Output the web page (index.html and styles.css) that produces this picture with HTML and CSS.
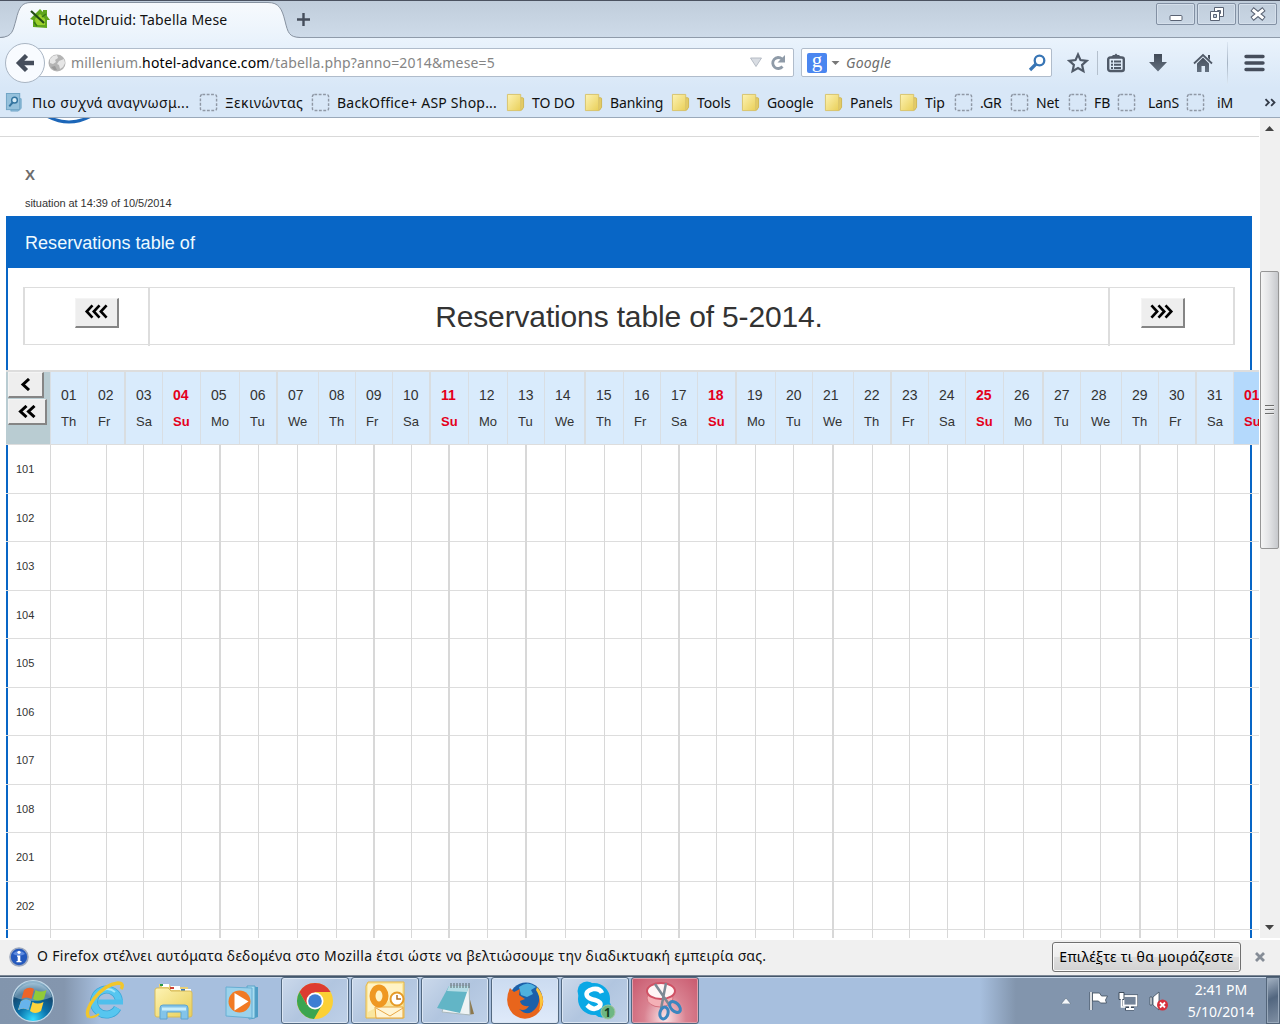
FILE: index.html
```html
<!DOCTYPE html>
<html lang="en">
<head>
<meta charset="utf-8">
<title>HotelDruid: Tabella Mese</title>
<link rel="stylesheet" href="styles.css">
</head>
<body>
<svg class="defs" width="0" height="0">
  <defs>
    <linearGradient id="gold" x1="0" y1="0" x2="1" y2="1"><stop offset="0" stop-color="#fdf3b4"/><stop offset="1" stop-color="#e9cf58"/></linearGradient>
    <linearGradient id="steel" x1="0" y1="0" x2="0" y2="1"><stop offset="0" stop-color="#414a57"/><stop offset="1" stop-color="#647180"/></linearGradient>
    <symbol id="folder" viewBox="0 0 20 20"><path d="M14 5h3.500a1 1 0 0 1 1 1v9l-2 3H13z" fill="#e3cb66" stroke="#cdb552"/><path d="M1.500 1.500h14v17h-14z" fill="url(#gold)" stroke="#d8c36c"/></symbol>
    <symbol id="blank" viewBox="0 0 20 20"><rect x="1.500" y="1.500" width="17" height="17" rx="2" fill="none" stroke="#8f98a5" stroke-width="1.500" stroke-dasharray="3 1.600"/></symbol>
  </defs>
</svg>

<header class="chrome">
  <div class="tabs">
    <svg class="tab-shape" width="300" height="38" viewBox="0 0 300 38"><defs><linearGradient id="tabfill" x1="0" y1="0" x2="0" y2="1"><stop offset="0" stop-color="#f7fafd"/><stop offset="1" stop-color="#eaf3fc"/></linearGradient></defs><path d="M0 38V37C13 36 13 29 16 19C19 6 22 1.500 31 1.500H268C279 1.500 282 8 285 20C288 32 289 36 300 36.500V38z" fill="url(#tabfill)"/><path d="M0 36.500C13 36 13 29 16 19C19 6 22 1.500 31 1.500H268C279 1.500 282 8 285 20C288 32 289 36 300 36.500" fill="none" stroke="#8792a0"/></svg>
    <svg class="favicon" width="22" height="22" viewBox="0 0 22 22"><path d="M1 11L11 1L14 4V2H18V8L21 12L18 12L18 20L4 19V12z" fill="#5fa51c"/><path d="M6 11L11 6L16 11V17H7z" fill="#9bd02c"/><path d="M2 3L15 15" stroke="#234c16" stroke-width="2.200"/><path d="M5 14l3 4M13 9l4-3" stroke="#397914" stroke-width="1.500"/></svg>
    <span class="tab-title">HotelDruid: Tabella Mese</span>
    <svg class="plus" width="15" height="15" viewBox="0 0 15 15"><path d="M7.500 1v13M1 7.500h13" stroke="#454d5b" stroke-width="2.400"/></svg>
    <div class="window-buttons">
      <span><svg width="16" height="16" viewBox="0 0 16 16"><rect x="2" y="9.500" width="12" height="5" rx="1" fill="#fff" stroke="#596273"/></svg></span>
      <span><svg width="16" height="16" viewBox="0 0 16 16"><path d="M5.500 1.500h9v9h-9z" fill="#fff" stroke="#596273"/><path d="M8.500 4.500h3v3h-3z" fill="#c4d0df" stroke="#596273"/><path d="M1.500 5.500h9v9h-9z" fill="#fff" stroke="#596273"/><path d="M4.500 8.500h3v3h-3z" fill="#c4d0df" stroke="#596273"/></svg></span>
      <span><svg width="16" height="16" viewBox="0 0 16 16"><path d="M2 3l12 10M14 3L2 13" stroke="#596273" stroke-width="5"/><path d="M2.700 3.600l10.600 8.800M13.300 3.600L2.700 12.400" stroke="#fff" stroke-width="3"/></svg></span>
    </div>
  </div>

  <div class="navbar">
    <span class="back"><svg width="20" height="20" viewBox="0 0 20 20"><path d="M11.500 2.500L4 10l7.500 7.500M4 10h15" fill="none" stroke="#454d5b" stroke-width="4.400"/></svg></span>
    <div class="address">
      <svg width="18" height="18" viewBox="0 0 18 18"><circle cx="9" cy="9" r="8.500" fill="#b4b4b4"/><path d="M2 5l3-3 4-1 1 3-3 2 1 2-3 2-3-1zM11 7l5-2 1 4-2 4-3 2-1-4-2-1z" fill="#e6e6e6"/><path d="M3 13l4-1 2 4-3 0z" fill="#999"/></svg>
      <span class="url">millenium.<b>hotel-advance.com</b>/tabella.php?anno=2014&amp;mese=5</span>
      <svg class="drop" width="14" height="11" viewBox="0 0 14 11"><path d="M1.500 1h11L7 9.500z" fill="#d9dde3" stroke="#b6bcc5"/></svg>
      <svg class="reload" width="16" height="16" viewBox="0 0 16 16"><path d="M12.500 11.500A5.500 5.500 0 1 1 12 4" fill="none" stroke="#8f9ba8" stroke-width="2.800"/><path d="M15 0v7.500H7.500z" fill="#8f9ba8"/></svg>
    </div>
    <div class="search">
      <span class="google">g</span>
      <svg width="9" height="6" viewBox="0 0 9 6"><path d="M.5 1h8L4.500 5z" fill="#777"/></svg>
      <i>Google</i>
      <svg class="lens" width="18" height="18" viewBox="0 0 18 18"><circle cx="11.500" cy="6.500" r="4.800" fill="none" stroke="#3875b5" stroke-width="2.300"/><path d="M8 10L2 16" stroke="#3875b5" stroke-width="3.200"/></svg>
    </div>
    <div class="tools">
      <svg width="22" height="22" viewBox="0 0 22 22"><path d="M11 2.500l2.500 5.600 6.200.7-4.600 4.100 1.300 6.200L11 16l-5.400 3.100 1.300-6.200L2.300 8.800l6.200-.7z" fill="none" stroke="#505a68" stroke-width="2.200"/></svg>
      <span class="divider short"></span>
      <svg width="20" height="20" viewBox="0 0 20 20"><rect x="2.200" y="4.500" width="15.600" height="13.500" rx="2" fill="none" stroke="#505a68" stroke-width="2.400"/><path d="M4 5l3-3h1.500L10 .5 11.500 2H13l3 3zM5 7.500h2v2H5zM8 7.500h7v2H8zM5 10.700h2v2H5zM8 10.700h7v2H8zM5 14h2v2H5zM8 14h7v2H8z" fill="#505a68"/></svg>
      <svg class="down" width="18" height="20" viewBox="0 0 18 20"><path d="M5 1h8v8h5l-9 9.500L0 9h5z" fill="url(#steel)"/></svg>
      <svg class="home" width="20" height="20" viewBox="0 0 20 20"><path d="M1 10.500L10 2l9 8.500" fill="none" stroke="#505a68" stroke-width="1.800"/><path d="M15 2h2v5l-2-2zM10 4.500l6 6V19h-4v-6H8.500v6H4v-8.500z" fill="url(#steel)"/></svg>
      <span class="divider"></span>
      <svg class="menu" width="21" height="18" viewBox="0 0 21 18"><path d="M2 2.500h17M2 9h17M2 15.500h17" stroke="#454d5b" stroke-width="3.400" stroke-linecap="round"/></svg>
    </div>
  </div>

  <nav class="bookmarks">
    <span class="most"><svg viewBox="0 0 18 20"><path d="M12 6h4v10l-3 3H5z" fill="#8ebcd8" stroke="#73a8c8"/><rect x=".5" y=".5" width="14" height="17" fill="#95c1dc" stroke="#6fa4c5"/><circle cx="9" cy="7.500" r="3" fill="#d7ecf7" stroke="#33749f" stroke-width="1.500"/><path d="M7 10l-3.500 4" stroke="#33749f" stroke-width="2"/></svg><em>Πιο συχνά αναγνωσμ...</em></span>
    <span class="greek"><svg><use href="#blank"/></svg><em>Ξεκινώντας</em></span>
    <span class="long"><svg><use href="#blank"/></svg><em>BackOffice+ ASP Shop...</em></span>
    <span><svg><use href="#folder"/></svg><em>TO DO</em></span>
    <span><svg><use href="#folder"/></svg><em>Banking</em></span>
    <span><svg><use href="#folder"/></svg><em>Tools</em></span>
    <span><svg><use href="#folder"/></svg><em>Google</em></span>
    <span><svg><use href="#folder"/></svg><em>Panels</em></span>
    <span><svg><use href="#folder"/></svg><em>Tip</em></span>
    <span><svg><use href="#blank"/></svg><em>.GR</em></span>
    <span><svg><use href="#blank"/></svg><em>Net</em></span>
    <span><svg><use href="#blank"/></svg><em>FB</em></span>
    <span class="wide"><svg><use href="#blank"/></svg><em>LanS</em></span>
    <span class="wide"><svg><use href="#blank"/></svg><em>iM</em></span>
    <span class="more"><svg viewBox="0 0 10 8"><path d="M1 1l3 3-3 3M6 1l3 3-3 3" fill="none" stroke="#333b48" stroke-width="1.600"/></svg></span>
  </nav>
</header>

<div class="viewport">
  <main class="page">
    <div class="logo-strip"><svg width="60" height="8" viewBox="0 0 60 8"><path d="M3 -3Q27 11 51 -3" fill="none" stroke="#1c66b8" stroke-width="3"/></svg></div>
    <p class="who">X</p>
    <p class="situation">situation at 14:39 of 10/5/2014</p>
    <section class="panel">
      <h2>Reservations table of</h2>
      <div class="month">
        <div><button class="b3"><svg width="28" height="17" viewBox="0 0 28 17"><path d="M10 1.500L3.500 8.500l6.500 7M18 1.500l-6.500 7 6.500 7M26 1.500l-6.500 7 6.500 7"/></svg></button></div>
        <h1>Reservations table of 5-2014.</h1>
        <div><button class="b3"><svg width="28" height="17" viewBox="0 0 28 17"><path d="M2 1.500l6.500 7-6.500 7M10 1.500l6.500 7-6.500 7M18 1.500l6.500 7-6.500 7"/></svg></button></div>
      </div>
      <div class="calendar" id="calendar">
        <div class="days" id="days">
          <div class="corner">
            <button class="one"><svg width="12" height="13" viewBox="0 0 12 13"><path d="M9 1L3 6.500l6 5.500"/></svg></button>
            <button class="two"><svg width="18" height="13" viewBox="0 0 18 13"><path d="M8.500 1L2.500 6.500l6 5.500M16.500 1l-6 5.500 6 5.500"/></svg></button>
          </div>
        </div>
      </div>
    </section>
  </main>
  <aside class="scrollbar">
    <svg width="9" height="6" viewBox="0 0 9 6"><path d="M0 5h9L4.500 0z" fill="#444"/></svg>
    <div class="thumb"><i></i><i></i><i></i></div>
    <svg class="end" width="9" height="6" viewBox="0 0 9 6"><path d="M0 1h9L4.500 6z" fill="#444"/></svg>
  </aside>
</div>

<div class="notice">
  <svg width="20" height="20" viewBox="0 0 20 20"><circle cx="10" cy="10" r="9" fill="#2459bd" stroke="#9da8bd" stroke-width="1.600"/><path d="M4 7a7 6 0 0 1 12 0q-6 3-12 0z" fill="#5f8ce0"/><circle cx="10" cy="5.300" r="1.600" fill="#fff"/><path d="M8 8.500h3.300V14H12.500v1.300h-5V14h1.200V9.700H8z" fill="#fff"/></svg>
  <span class="notice-text">Ο Firefox στέλνει αυτόματα δεδομένα στο Mozilla έτσι ώστε να βελτιώσουμε την διαδικτυακή εμπειρία σας.</span>
  <button class="share"><span>Επιλέ<u>ξ</u>τε τι θα μοιράζεστε</span></button>
  <svg class="close" width="12" height="12" viewBox="0 0 12 12"><path d="M2 2l8 8M10 2l-8 8" stroke="#858c96" stroke-width="2.800"/></svg>
</div>

<footer class="taskbar">
  <span class="start"><svg width="46" height="46" viewBox="0 0 46 46"><defs><radialGradient id="orb" cx=".5" cy=".95" r=".9"><stop offset="0" stop-color="#35dcff"/><stop offset=".4" stop-color="#0b74ad"/><stop offset=".75" stop-color="#144a72"/><stop offset="1" stop-color="#8eb4cc"/></radialGradient></defs><circle cx="23" cy="23" r="20.500" fill="url(#orb)" stroke="#c3d9e8" stroke-width="1.200"/><path d="M4 19a19.500 18 0 0 1 38 0q-19 8-38 0z" fill="#c3dcec" opacity=".4"/><path d="M14 12q5-4 10-1l-2.500 10q-5-3-10 0z" fill="#ee6428"/><path d="M25.500 12q5 3 11 0L34 21q-6 3-11 0z" fill="#91cb38"/><path d="M11 23q5-3 10 0l-2.500 9q-5-3-10.500 0z" fill="#f0b73e"/><path d="M11 23q5-3 10 0l-2.500 9q-5-3-10.500 0z" fill="#67b4ed"/><path d="M22.500 24q5 3 11 0L31 33q-6 4-11 0z" fill="#ffd33c"/></svg></span>
  <span class="pinned"><svg width="42" height="42" viewBox="0 0 42 42"><path d="M35 21.500A12.500 12.500 0 1 0 33.500 28" fill="none" stroke="#3aa6d8" stroke-width="8"/><path d="M35 21.500A12.500 12.500 0 1 0 33.500 28" fill="none" stroke="#57c6f0" stroke-width="6.500"/><path d="M14 19.500h25v5H14z" fill="#4fbfec"/><path d="M12 17a12 12 0 0 1 19-5" fill="none" stroke="#a5e7fb" stroke-width="2"/><path d="M5 37C-2 31 16 5 34 3c5 0 5 3 3 6" fill="none" stroke="#f1c62c" stroke-width="3.400"/><path d="M5 37q5 1 10-3" fill="none" stroke="#f1c62c" stroke-width="2"/></svg></span>
  <span class="pinned"><svg width="42" height="42" viewBox="0 0 42 42"><path d="M6 4h10l2 3h17v5H6z" fill="#ead178"/><path d="M9 4h7v3H9zM18 6h9v4h-9zM27 9h11v4H27z" fill="#fff"/><path d="M7 4h3v2H7z" fill="#2c9947"/><path d="M17 7h4v2h-4z" fill="#ce4134"/><path d="M28 9h4v2h-4z" fill="#3878bd"/><path d="M2 10q0-2 2-2h11l3 3h19q2 0 2 2v22q0 2-2 2H4q-2 0-2-2z" fill="url(#gold)" stroke="#d7bb5b"/><path d="M7 39V28q0-3 3-3h22q3 0 3 3v11h-7v-7H14v7z" fill="#83c4e9" stroke="#5fa4d0"/><path d="M9 29h24" stroke="#c9effd" stroke-width="3"/></svg></span>
  <span class="pinned"><svg width="42" height="42" viewBox="0 0 42 42"><path d="M27 7h8v30l-7 2z" fill="#4e9dc5"/><path d="M24 6h8v32l-6 1z" fill="#a8dcf0" stroke="#57a2c7"/><path d="M3 7l26 1v30L3 36z" fill="#9bd2eb" stroke="#67aed3"/><circle cx="16.500" cy="21.500" r="11" fill="#f17a24"/><path d="M11.500 13l14 8.500-14 9z" fill="#fff"/></svg></span>
  <span class="task"><svg width="40" height="40" viewBox="0 0 40 40"><circle cx="20" cy="20" r="18" fill="#fbd035"/><path d="M4.400 11A18 18 0 0 1 35.600 11H20L12 24z" fill="#dd3c31"/><path d="M4.400 11A18 18 0 0 0 19 38L27 24 12 24z" fill="#3ba550"/><circle cx="20" cy="20" r="8.500" fill="#fff"/><circle cx="20" cy="20" r="6.800" fill="#3d7ed3"/></svg></span>
  <span class="task"><svg width="40" height="40" viewBox="0 0 40 40"><path d="M3 1h36v36H1V5z" fill="#fae79f" stroke="#e8b743"/><path d="M3 3l34 0v10L3 31z" fill="#fff3c5"/><path d="M10 26h28v11H11z" fill="#fff5d4" stroke="#e7a53b"/><path d="M11 27l14 8 13-8" fill="none" stroke="#e9a744"/><ellipse cx="14" cy="15" rx="6.500" ry="8.500" fill="none" stroke="#ef9821" stroke-width="6"/><circle cx="32" cy="18" r="6.500" fill="#fff" stroke="#e69b27" stroke-width="2"/><path d="M32 14v4h4" fill="none" stroke="#b76e19" stroke-width="1.500"/></svg></span>
  <span class="task"><svg width="42" height="40" viewBox="0 0 42 40"><path d="M33 8l7 25-8 1z" fill="#8d784c"/><path d="M16 5h19l1 29-28-3z" fill="#eef3f4" stroke="#a9b8bd"/><path d="M15 5h20L26 32 3 27z" fill="#62b5c6"/><path d="M15 5h20l-2 6-20-1z" fill="#b5dce5"/><path d="M17 2v5M20 2v5M23 2v5M26 2v5M29 2v5M32 2v5M35 2v5" stroke="#58686d"/></svg></span>
  <span class="task active"><svg width="42" height="42" viewBox="0 0 42 42"><circle cx="22" cy="19" r="16.500" fill="#1c60a9"/><path d="M15 7q9-7 17 0l-5 3 2 4-6 3-6-2z" fill="#4eb1df"/><path d="M33 7q13 16-1 28-12 8-23-1Q-1 23 6 8l4 4 6-3-1 6 6 4-5 2q1 6 9 5-4 6-10 3 9 9 17-1 6-8 1-21z" fill="#e8651c"/><path d="M33 7q11 13 2 24 3-12-3-21z" fill="#fcc43b"/></svg></span>
  <span class="task"><svg width="42" height="42" viewBox="0 0 42 42"><circle cx="20" cy="19" r="16" fill="#0aa8e5"/><circle cx="13" cy="11" r="9.500" fill="#0aa8e5"/><circle cx="28" cy="28" r="9.500" fill="#0aa8e5"/><path d="M28 13q-2-5-9-4-8 2-6 7 2 3 8 4 7 2 5 6-6 6-13-1" fill="none" stroke="#fff" stroke-width="4.600"/><circle cx="34" cy="32" r="7" fill="#6eb783" stroke="#a2c5a1"/></svg><small>1</small></span>
  <span class="task alert"><svg width="44" height="42" viewBox="0 0 44 42"><ellipse cx="17" cy="18" rx="13" ry="9" fill="#f4b0b6" stroke="#d5717e"/><ellipse cx="18" cy="11" rx="14" ry="8" fill="#fff5f5" stroke="#d05164" stroke-width="2"/><path d="M12 4l15 22M23 3l-5 26" stroke="#7c8994" stroke-width="2.500"/><ellipse cx="32" cy="27" rx="4" ry="6.500" transform="rotate(-45 32 27)" fill="none" stroke="#3b86bf" stroke-width="3"/><ellipse cx="21" cy="33" rx="4" ry="6" transform="rotate(15 21 33)" fill="none" stroke="#3b86bf" stroke-width="3"/></svg></span>
  <div class="tray">
    <svg class="up" width="10" height="6" viewBox="0 0 10 6"><path d="M0 6h10L5 0z" fill="#f5f8fb" stroke="#596b80" stroke-width=".6"/></svg>
    <svg class="flag" width="20" height="20" viewBox="0 0 20 20"><path d="M2 1v18" stroke="#3e4c5c" stroke-width="3"/><path d="M2 1v18" stroke="#fff" stroke-width="1.600"/><path d="M3.500 2h7l2 3h6l-2 4 1 3h-6l-2-2h-6z" fill="#fff" stroke="#3e4c5c" stroke-width=".8"/></svg>
    <svg class="net" width="21" height="20" viewBox="0 0 21 20"><path d="M4 3.500h16v12h-4v4H7v-4H4z" fill="#3e4c5c"/><rect x="5.500" y="5" width="13" height="9.500" fill="#738398" stroke="#fff" stroke-width="1.800"/><path d="M8 18h8M12 15v3" stroke="#fff" stroke-width="1.800"/><path d="M1 1.500h5v7H1z" fill="#fff" stroke="#3e4c5c"/><path d="M3.500 8v8h4" fill="none" stroke="#fff" stroke-width="1.500"/></svg>
    <svg class="vol" width="20" height="20" viewBox="0 0 20 20"><path d="M1 6h2v8H1zM4 6l6-5v18l-6-5z" fill="#fff" stroke="#3e4c5c" stroke-width=".8"/><circle cx="13.500" cy="14" r="5.500" fill="#d8303b"/><path d="M11 11.500l5 5M16 11.500l-5 5" stroke="#fff" stroke-width="1.800"/></svg>
  </div>
  <div class="clock"><span>2:41 PM</span><span>5/10/2014</span></div>
  <div class="peek"></div>
</footer>
<script src="calendar.js"></script>
</body>
</html>
```
FILE: styles.css
```css
* { box-sizing: border-box; }
body { margin: 0; width: 1280px; height: 1024px; overflow: hidden; background: #fff; font: 14px "Noto Sans", sans-serif; color: #111; display: flex; flex-direction: column; }
svg { display: block; flex: none; }
.defs { position: absolute; }
button { padding: 0; font: inherit; }

.chrome { height: 118px; flex: none; border-bottom: 1px solid #9aa9ba; background: linear-gradient(#eaf3fc, #eaf3fc 38px, #d8e7f7 75%); }
.tabs { height: 38px; display: flex; align-items: center; position: relative; background: linear-gradient(#c0cddb, #cedbe9); border-top: 1px solid #4b5260; border-bottom: 1px solid #8f9baa; }
.tab-shape { position: absolute; left: 0; top: 0; }
.favicon { margin-left: 29px; position: relative; z-index: 1; }
.tab-title { margin-left: 7px; width: 169px; position: relative; z-index: 1; white-space: nowrap; letter-spacing: .2px; }
.plus { margin-left: 69px; }
.window-buttons { margin: 0 3px 11px auto; display: flex; gap: 2px; }
.window-buttons span { width: 39px; height: 22px; border: 1px solid #8290a3; border-radius: 2px; box-shadow: inset 0 0 0 1px #d5dfeb; display: flex; align-items: center; justify-content: center; }

.navbar { height: 49px; display: flex; align-items: center; padding-left: 5px; }
.back { width: 40px; height: 40px; flex: none; border: 1px solid #a9b5c3; border-radius: 50%; background: #f8fbff; display: flex; align-items: center; justify-content: center; z-index: 1; }
.address { margin-left: -8px; width: 757px; height: 29px; border: 1px solid #b0bccb; background: #fff; border-radius: 2px; display: flex; align-items: center; padding-left: 10px; }
.url { margin-left: 5px; color: #858585; white-space: nowrap; letter-spacing: .15px; }
.url b { color: #000; font-weight: 400; }
.drop { margin-left: auto; }
.reload { margin: 0 7px 0 7px; }
.search { margin-left: 7px; width: 251px; height: 29px; border: 1px solid #b0bccb; background: #fff; border-radius: 2px; display: flex; align-items: center; padding: 0 5px; }
.google { width: 20px; height: 20px; background: #4a86f0; color: #fff; border-radius: 2px; font: 21px/15px "Liberation Serif", serif; text-align: center; margin-right: 4px; }
.search i { color: #6d6d6d; margin-left: 6px; letter-spacing: .2px; }
.lens { margin-left: auto; }
.tools { display: flex; align-items: center; margin-left: 15px; }
.divider { width: 1px; height: 42px; background: linear-gradient(#dce7f3, #a5b3c3, #dce7f3); margin-left: 14px; }
.divider.short { height: 24px; margin: 0 8px; background: #b4c0cd; }
.down { margin-left: 23px; }
.home { margin-left: 26px; }
.menu { margin-left: 16px; }

.bookmarks { height: 31px; display: grid; grid-template-columns: 194px 112px 195px 78px 87px 70px 83px 75px 55px 56px 58px 49px 69px 70px 1fr; padding-left: 5px; align-items: center; }
.bookmarks span { display: flex; align-items: center; gap: 7px; white-space: nowrap; }
.bookmarks svg { width: 19px; height: 19px; }
.bookmarks em { font-style: normal; letter-spacing: -.1px; }
.bookmarks .most { gap: 8px; }
.bookmarks .most em, .bookmarks .greek em { letter-spacing: .38px; }
.bookmarks .long em { letter-spacing: .22px; }
.bookmarks .wide { gap: 12px; }
.bookmarks .more svg { width: 12px; height: 9px; margin-left: 8px; }

.viewport { height: 820px; flex: none; display: flex; font-family: "Liberation Sans", Arial, sans-serif; }
.page { width: 1260px; height: 820px; overflow: hidden; border-right: 1px solid #fff; }
.logo-strip { height: 19px; border-bottom: 1px solid #d9d9d9; padding-left: 42px; }
.who { margin: 29px 0 0 25px; font-size: 15px; line-height: 18px; font-weight: 700; color: #6d6d6d; }
.situation { margin: 12px 0 0 25px; font-size: 11px; line-height: 14px; color: #333; letter-spacing: -.05px; }
.panel { margin: 6px 0 0 6px; width: 1246px; height: 760px; border: solid #0866c6; border-width: 0 2px; }
.panel h2 { margin: 0 -2px; height: 52px; padding-left: 19px; background: #0866c6; color: #eefaff; font-size: 18px; line-height: 54px; font-weight: 400; letter-spacing: .04px; }
.month { margin: 19px 0 0 15px; width: 1212px; height: 58px; border: 1px solid #ddd; border-left-width: 2px; border-right-width: 2px; display: grid; grid-template-columns: 123px 1fr 123px; }
.month div { display: flex; justify-content: center; padding-top: 10px; }
.month div:first-child { padding-left: 20px; }
.month div:last-child { padding-right: 18px; }
.month h1 { margin: 0; border: solid #ddd; border-width: 0 2px; font-size: 30px; line-height: 58px; font-weight: 400; text-align: center; color: #333; letter-spacing: -.15px; }
.panel button { background: #eee; border: solid; border-width: 1px 2px 2px 1px; border-color: #f4f4f4 #858585 #858585 #f4f4f4; }
.panel button svg { margin: 0 auto; }
.panel button path { fill: none; stroke: #000; stroke-width: 3; }
.b3 { width: 44px; height: 30px; }
.b3 svg { padding-bottom: 2px; }

.calendar { margin: 25px 0 0 -2px; width: 1253px; overflow: hidden; border-top: 2px solid #ddd; }
.days { display: grid; width: 1290px; height: 73px; grid-template-columns: 44px 37px 38px 37px 38px 39px 38px 41px 37px 37px 38px 38px 39px 37px 41px 38px 37px 37px 39px 39px 37px 41px 38px 37px 37px 38px 40px 37px 41px 37px 38px 37px 62px; border-bottom: 1px solid #ddd; }
.corner { background: #b9ccd2; padding-left: 2px; display: flex; flex-direction: column; gap: 1px; }
.corner button { height: 26px; }
.corner .one { width: 36px; }
.corner .two { width: 39px; }
.day { background: #d9ebfc; border-left: 1px solid #d9dee3; padding: 10px 0 0 10px; line-height: 26px; color: #333; white-space: nowrap; }
.day.thick { margin-left: -1px; border-left: 2px solid #d9dde0; padding-left: 10px; }
.day span { display: block; }
.day span:first-child { font-size: 14px; }
.day span:last-child { font-size: 13px; line-height: 27px; }
.day.sunday { color: #e4001b; font-weight: 700; }
.day.next { background: #b4d9fc; }
.room { display: grid; width: 1290px; grid-template-columns: 44px 56px 37px 38px 38px 39px 39px 39px 37px 38px 37px 39px 38px 40px 39px 37px 37px 38px 39px 38px 39px 40px 37px 38px 37px 39px 38px 39px 39px 38px 37px 80px; height: 49px; border-bottom: 1px solid #ddd; }
.room:nth-child(odd) { height: 48px; }
.room b { font-weight: 400; font-size: 11px; line-height: 49px; padding-left: 10px; color: #333; }
.room i { border-left: 1px solid #d8d8d8; }
.room i.thick { border-left-width: 2px; }

.scrollbar { width: 20px; background: #f0f0f0; display: flex; flex-direction: column; align-items: center; padding: 8px 2px 8px 0; }
.scrollbar .end { margin-top: auto; }
.thumb { margin-top: 139px; width: 19px; height: 278px; border: 1px solid #969696; border-radius: 2px; background: linear-gradient(90deg, #f5f5f5, #e4e5e7 45%, #c6c8cc); display: flex; flex-direction: column; align-items: center; justify-content: center; gap: 2px; }
.thumb i { width: 9px; height: 2px; background: #6d6d6d; border-bottom: 1px solid #eee; }

.notice { height: 38px; flex: none; background: #f0f0f0; border-top: 2px solid #fff; border-bottom: 1px solid #7d8896; display: flex; align-items: center; padding: 0 14px 2px 9px; }
.notice-text { margin: -3px 0 0 8px; white-space: nowrap; letter-spacing: .3px; }
.share { margin-left: auto; width: 189px; height: 30px; border: 1px solid #707070; border-radius: 3px; background: linear-gradient(#f5f5f5, #ededed 49%, #dfdfdf 50%, #d2d2d2); box-shadow: inset 0 0 0 1px #fafafa; white-space: nowrap; color: #000; letter-spacing: .25px; }
.close { margin-left: 13px; }

.taskbar { height: 48px; flex: none; border-top: 1px solid #44566a; box-shadow: inset 0 1px #c9d8ea; display: flex; align-items: center; background: linear-gradient(90deg, #8295ad 0, #8496ae 64px, #a7bfde 100px, #a7bfde 980px, #8295ad 1016px); }
.start { width: 70px; padding-left: 10px; }
.pinned { width: 69px; padding-left: 14px; }
.pinned + .pinned { width: 70px; }
.task { width: 68px; height: 47px; margin: 0 1px; border: 1px solid #536981; border-radius: 3px; box-shadow: inset 0 0 0 1px #dce7f4; background: linear-gradient(135deg, #cbd9eb, #b1c5df 50%, #bfd1e8); display: flex; align-items: center; justify-content: center; position: relative; flex: none; }
.pinned + .task { margin-left: 2px; }
.task.active { background: linear-gradient(#cbdbf0, #dfeafa); }
.task.alert { background: radial-gradient(ellipse at 50% 90%, #fbe6e8, #d98291 45%, #c8586d); box-shadow: inset 0 0 0 1px #dfa0ab; }
.task small { position: absolute; left: 42px; top: 26px; font: bold 12px "Noto Sans", sans-serif; color: #123b20; }
.tray { margin-left: auto; display: flex; align-items: center; height: 100%; }
.flag { margin-left: 18px; }
.net { margin-left: 9px; }
.vol { margin-left: 10px; }
.clock { width: 97px; padding: 1px 0 0 7px; display: flex; flex-direction: column; align-items: center; font-size: 14px; line-height: 22px; color: #fff; }
.peek { width: 14px; height: 47px; border: 1px solid #53657a; box-shadow: inset 0 0 0 1px #99a9bb; background: linear-gradient(155deg, #a5b3c4, #52667f 45%, #8090a4); }
```
FILE: calendar.js
```js
const names = ["Th", "Fr", "Sa", "Su", "Mo", "Tu", "We"];
const days = document.getElementById("days");
const calendar = document.getElementById("calendar");
for (let d = 1; d <= 32; d++) {
  const name = names[(d - 1) % 7];
  const cell = document.createElement("div");
  cell.className = "day" + (name === "Su" ? " sunday" : "") + (d % 4 === 3 ? " thick" : "") + (d === 32 ? " next" : "");
  const number = String(d === 32 ? 1 : d).padStart(2, "0");
  cell.innerHTML = `<span>${number}</span><span>${name}</span>`;
  days.append(cell);
}
const thick = [5, 9, 11, 13, 17, 21, 29];
for (const room of [101, 102, 103, 104, 105, 106, 107, 108, 201, 202, ""]) {
  const row = document.createElement("div");
  row.className = "room";
  let html = `<b>${room}</b>`;
  for (let d = 1; d <= 31; d++) html += `<i${thick.includes(d) ? ' class="thick"' : ""}></i>`;
  row.innerHTML = html;
  calendar.append(row);
}
```
